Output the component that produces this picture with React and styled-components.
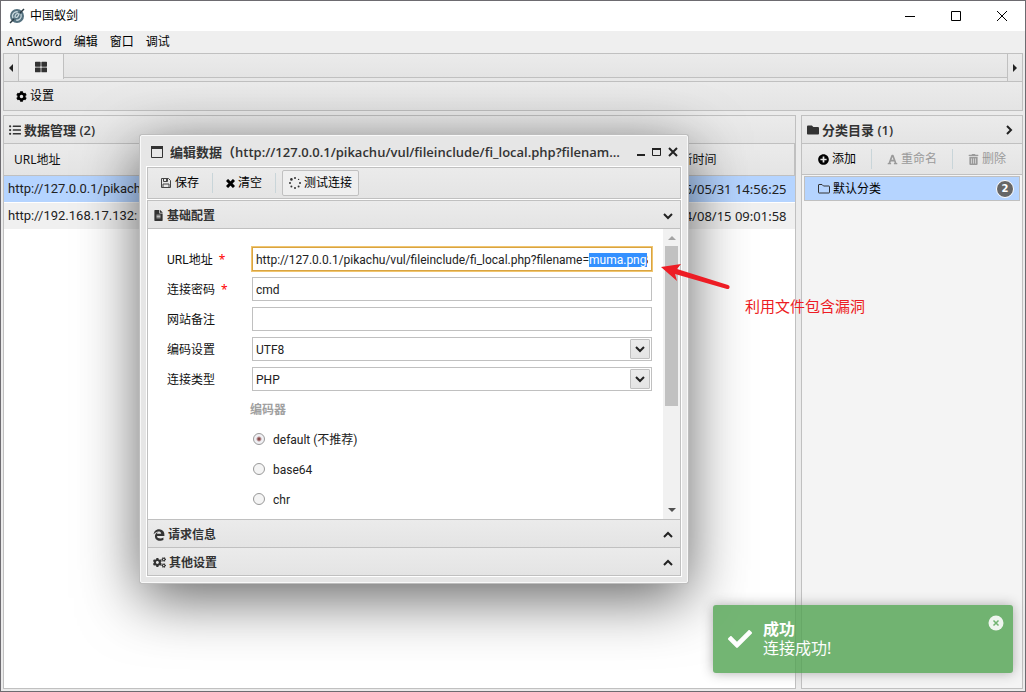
import React, { useEffect, useRef } from "react";
import styled, { createGlobalStyle, css } from "styled-components";
import {
  FaCog, FaCogs, FaListUl, FaFolder, FaPlusCircle, FaFont,
  FaTrashAlt, FaFileAlt, FaThLarge, FaCheck,
} from "react-icons/fa";

const line = "#c0c0c0";
const bar = "linear-gradient(#ebebeb, #e4e4e4)";
const uiFont = '"Noto Sans", "Noto Sans CJK SC", sans-serif';
const formFont = 'Roboto, "Noto Sans CJK SC", sans-serif';
const headFont = '"Open Sans", "Noto Sans CJK SC", sans-serif';

const GlobalStyle = createGlobalStyle`
  * { box-sizing: border-box; }
  body { margin: 0; font: 12px/16px ${uiFont}; color: #111; background: #ebebeb; }
  button, input, select { font: inherit; color: inherit; }
  svg { display: block; flex: none; }
`;

const Shell = styled.div`
  position: relative;
  min-height: 100vh;
  display: flex;
  flex-direction: column;
  border: 1px solid #6d6b70;
  background: #ebebeb;
  overflow: hidden;
`;

const TitleBar = styled.header`
  display: flex;
  align-items: center;
  height: 30px;
  padding-left: 8px;
  background: #fff;
  color: #000;
`;
const AppName = styled.h1`
  flex: 1;
  margin: 0 0 0 5px;
  font-size: 12px;
  font-weight: 400;
`;
const CaptionButton = styled.button`
  display: grid;
  place-items: center;
  width: 46px;
  height: 30px;
  padding: 0;
  border: 0;
  background: none;
`;

const MenuBar = styled.nav`
  display: flex;
  gap: 12px;
  height: 22px;
  padding: 0 6px;
  background: #efefef;
`;
const MenuItem = styled.button`
  padding: 0;
  border: 0;
  background: none;
  color: #000;
`;

const Workspace = styled.main`
  flex: 1;
  display: flex;
  flex-direction: column;
  padding: 0 2px 2px;
`;

const TabBar = styled.div`
  display: flex;
  height: 29px;
  border: 1px solid ${line};
  background: #e8e8e8;
`;
const TabArrow = styled.button`
  display: grid;
  place-items: center;
  width: 15px;
  padding: 0;
  border: 0;
  border-${(p) => (p.$end ? "left" : "right")}: 1px solid ${line};
  background: ${bar};
`;
const Tab = styled.button`
  display: flex;
  justify-content: center;
  align-items: center;
  width: 45px;
  height: 25px;
  padding: 0;
  border: 0;
  border-right: 1px solid ${line};
  background: #efefef;
  color: #333;
`;
const TabTrack = styled.div`
  flex: 1;
  height: 24px;
  border-bottom: 1px solid ${line};
  background: ${bar};
`;

const Ribbon = styled.div`
  display: flex;
  align-items: center;
  height: 29px;
  padding-left: 5px;
  border: 1px solid ${line};
  border-top: 0;
  background: ${bar};
`;
const ToolButton = styled.button`
  display: flex;
  align-items: center;
  gap: 3px;
  height: 26px;
  padding: 0 6px;
  border: 1px solid ${(p) => (p.$raised ? line : "transparent")};
  border-radius: 2px;
  background: ${(p) => (p.$raised ? "#efefef" : "none")};
  color: ${(p) => (p.disabled ? "#9a9a9a" : "#000")};
`;
const Divider = styled.span`
  width: 1px;
  height: 20px;
  background: #c9d5d9;
`;

const Columns = styled.div`
  flex: 1;
  display: flex;
  gap: 5px;
  padding-top: 4px;
`;
const Panel = styled.section`
  display: flex;
  flex-direction: column;
  border: 1px solid ${line};
  background: ${(p) => (p.$side ? "#f4f4f4" : "#fff")};
  ${(p) => (p.$side ? css`width: 222px; flex: none;` : css`flex: 1; min-width: 0;`)}
`;
const PanelHead = styled.h2`
  display: flex;
  align-items: center;
  gap: 3px;
  height: 28px;
  margin: 0;
  padding: 0 8px 0 5px;
  border-bottom: 1px solid ${line};
  background: ${bar};
  color: #333;
  font: 600 13px/18px ${headFont};
`;
const Grow = styled.span`
  flex: 1;
  overflow: hidden;
  white-space: nowrap;
  text-overflow: ellipsis;
`;

const Grid = styled.table`
  width: 100%;
  border-collapse: collapse;
  table-layout: fixed;
  th {
    height: 31px;
    padding: 2px 10px 0;
    border-bottom: 1px solid ${line};
    background: ${bar};
    font-weight: 400;
    text-align: left;
  }
  td {
    height: 27px;
    padding: 0 4px;
    overflow: hidden;
    color: #222;
    font-size: 13px;
    white-space: nowrap;
  }
  td:first-child { font-family: ${formFont}; }
  th:last-child, td:last-child { width: 136px; }
  td:last-child { padding: 0 8px 0 0; text-align: right; }
  th:last-child { border-right: 1px solid ${line}; }
`;
const GridRow = styled.tr`
  background: ${(p) => (p.$selected ? "#b5d4ff" : "#f0f0f0")};
  border-bottom: 1px solid #fff;
`;

const PanelTools = styled.div`
  display: flex;
  align-items: center;
  justify-content: space-between;
  height: 31px;
  padding: 0 9px;
  border-bottom: 1px solid ${line};
  background: ${bar};
`;
const Category = styled.button`
  display: flex;
  align-items: center;
  gap: 3px;
  height: 25px;
  margin: 1px 2px;
  padding: 0 5px 0 13px;
  border: 1px solid ${line};
  background: #b5d4ff;
  color: #000;
  text-align: left;
`;
const Count = styled.span`
  display: grid;
  place-items: center;
  width: 18px;
  height: 18px;
  border: 1px solid #fff;
  border-radius: 50%;
  background: #666;
  color: #fff;
  font: 700 10px/16px "DejaVu Sans", sans-serif;
`;

const Dialog = styled.section`
  position: absolute;
  left: 139px;
  top: 134px;
  width: 548px;
  padding: 0 6px 6px;
  border: 1px solid #f8f8f8;
  border-radius: 2px;
  background: #e6e6e6;
  box-shadow: 0 0 0 1px #bdbdbd, 0 15px 60px rgba(0, 0, 0, 0.62);
`;
const DialogHead = styled.header`
  display: flex;
  align-items: center;
  gap: 7px;
  height: 31px;
  padding: 0 3px 0 4px;
  color: #333;
`;
const DialogTitle = styled.h2`
  flex: 1;
  min-width: 0;
  margin: 0 4px 0 0;
  overflow: hidden;
  font: 600 13px/18px ${headFont};
  white-space: nowrap;
  text-overflow: ellipsis;
`;
const IconButton = styled.button`
  padding: 0;
  border: 0;
  background: none;
  color: #222;
`;
const DialogTools = styled.div`
  display: flex;
  align-items: center;
  gap: 6px;
  height: 32px;
  padding: 0 5px;
  border: 1px solid ${line};
  outline: 1px solid #fff;
  background: ${bar};
`;
const Accordion = styled.div`
  margin-top: 1px;
  border: 1px solid ${line};
  outline: 1px solid #fff;
`;
const SectionHead = styled(PanelHead)`
  padding: 2px 7px 0 5px;
  border-top: ${(p) => (p.$closed ? `1px solid ${line}` : "0")};
  border-bottom: ${(p) => (p.$closed ? "0" : `1px solid ${line}`)};
  font: 700 12px/16px ${uiFont};
`;
const SectionBody = styled.div`
  display: flex;
  background: #fff;
`;

const Form = styled.form`
  flex: 1;
  display: grid;
  gap: 6px;
  padding: 18px 11px 8px 19px;
  font-family: ${formFont};
`;
const Field = styled.div`
  display: grid;
  grid-template-columns: 85px 1fr;
  align-items: center;
  height: 24px;
  label { padding-top: 2px; }
`;
const Required = styled.span`
  margin-left: 6px;
  color: #f00;
  font-family: ${uiFont};
`;
const TextBox = styled.input`
  width: 100%;
  height: 24px;
  padding: 2px 3px 0;
  border: 1px solid ${line};
  border-radius: 0;
  background: #fff;
  color: #222;
  &:focus {
    outline: 1px solid #f0c56f;
    border-color: #d9a441;
  }
  &::selection { background: #3390ff; color: #fff; }
`;
const SelectWrap = styled.div`
  position: relative;
`;
const Select = styled.select`
  display: block;
  width: 100%;
  height: 24px;
  padding: 2px 3px 0;
  border: 1px solid ${line};
  border-radius: 0;
  appearance: none;
  background: #fff;
  color: #222;
`;
const SelectMark = styled.span`
  position: absolute;
  top: 2px;
  right: 2px;
  display: grid;
  place-items: center;
  width: 20px;
  height: 20px;
  border: 1px solid ${line};
  border-radius: 1px;
  background: ${bar};
  pointer-events: none;
`;
const GroupTitle = styled.div`
  height: 24px;
  padding-left: 83px;
  color: #a0a0a0;
  font-weight: 700;
  line-height: 26px;
`;
const Choice = styled.label`
  display: flex;
  align-items: center;
  gap: 8px;
  height: 24px;
  padding-left: 86px;
  color: #222;
  span { padding-top: 2px; }
`;
const Radio = styled.input`
  width: 12px;
  height: 12px;
  margin: 0;
  border: 1px solid #999;
  border-radius: 50%;
  appearance: none;
  background: #f4f4f4;
  &:checked { background: radial-gradient(circle, #8a4b4b 1px, #f0f0f4 3px); }
`;

const ScrollTrack = styled.div`
  display: flex;
  flex-direction: column;
  align-items: center;
  width: 17px;
  padding: 6px 0;
  background: #f1f1f1;
`;
const ScrollThumb = styled.div`
  width: 13px;
  height: 160px;
  margin: 6px 0 auto;
  background: #c1c1c1;
`;

const Toast = styled.div`
  position: absolute;
  right: 12px;
  bottom: 18px;
  display: flex;
  align-items: center;
  gap: 11px;
  width: 300px;
  height: 68px;
  padding: 0 15px;
  border-radius: 3px;
  background: #51a351;
  box-shadow: 0 0 12px #999;
  color: #fff;
  font-size: 16px;
  line-height: 19px;
  opacity: 0.8;
`;
const ToastText = styled.div`
  flex: 1;
`;
const ToastClose = styled(IconButton)`
  align-self: flex-start;
  margin: 10px -6px 0 0;
`;

const Note = styled.div`
  position: absolute;
  left: 659px;
  top: 260px;
  color: #ed1c24;
  font: 15px/20px "Noto Sans CJK SC", sans-serif;
  p { margin: 7px 0 0 85px; }
  svg { height: 28px; }
`;

const chevrons = {
  down: "M1 3 5 7 9 3",
  up: "M1 7 5 3 9 7",
  right: "M3 1 7 5 3 9",
};
const Chevron = ({ to }) => (
  <svg width="10" height="10" viewBox="0 0 10 10" fill="none" stroke="#222" strokeWidth="2">
    <path d={chevrons[to]} />
  </svg>
);

const triangles = {
  left: "M5 0V8L1 4Z",
  right: "M1 0V8L5 4Z",
};
const Triangle = ({ to }) => (
  <svg width="6" height="8" viewBox="0 0 6 8" fill="#222"><path d={triangles[to]} /></svg>
);

const Logo = () => (
  <svg width="16" height="16" viewBox="0 0 16 16">
    <circle cx="8" cy="8" r="7" fill="#54717f" />
    <path d="M4 10C2 6 6 3 9 4M12 6c1 4-2 7-5 6M6 9c0-3 2-4 4-3-1 3-2 4-4 3Z" fill="none" stroke="#c9d8de" strokeWidth="1.3" />
    <path d="M1 15 5 11M11 5 15 1" stroke="#2b3a42" strokeWidth="1.5" />
  </svg>
);

const SpinDots = () => (
  <svg width="12" height="12" viewBox="0 0 12 12" fill="#333">
    <circle cx="6" cy="1" r="1" /><circle cx="9.6" cy="2.4" r=".7" />
    <circle cx="11" cy="6" r="1" /><circle cx="9.6" cy="9.6" r="1" />
    <circle cx="6" cy="11" r="1" /><circle cx="2.4" cy="9.6" r="1" />
    <circle cx="1" cy="6" r="1" /><circle cx="2.4" cy="2.4" r="1.3" />
  </svg>
);

const Floppy = () => (
  <svg width="12" height="12" viewBox="0 0 12 12" fill="none" stroke="#444">
    <path d="M1.5 1.500h7l2 2v7h-9z" />
    <path d="M3.500 1.500v3h4v-3M3 10.500v-3.500h6v3.500" />
    <path d="M6.500 2v2" />
  </svg>
);

const Clear = () => (
  <svg width="9" height="9" viewBox="0 0 9 9" stroke="#000" strokeWidth="3">
    <path d="M1 1 8 8M8 1 1 8" />
  </svg>
);

const FolderOutline = () => (
  <svg width="12" height="12" viewBox="0 0 12 12" fill="none" stroke="#333">
    <path d="M.5 2q0-.5.5-.5h3l1.500 1.500h5.500q.5 0 .5.500v6q0 .5-.5.5h-10q-.5 0-.5-.5z" />
  </svg>
);

const EdgeMark = () => (
  <svg width="12" height="12" viewBox="0 0 512 512" fill="#333">
    <path d="M25.714 228.163c.111-.162.23-.323.342-.485-.021.162-.045.323-.065.485h-.277zm460.572 15.508c0-44.032-7.754-84.465-28.801-122.405C416.498 47.879 343.912 8.001 258.893 8.001 118.962 7.724 40.617 113.214 26.056 227.679c42.429-61.312 117.073-121.376 220.375-124.966 0 0 109.666 0 99.419 104.957H169.997c6.369-37.386 18.554-58.986 34.339-78.926-75.048 34.9-121.85 96.096-120.742 188.315.83 71.448 50.124 144.836 120.743 171.976 83.357 31.843 192.776 7.2 240.132-21.324V363.307c-80.864 56.494-270.871 60.925-272.255-67.572h314.073v-52.064z" />
  </svg>
);

const rows = [
  { url: "http://127.0.0.1/pikachu/", time: "2025/05/31 14:56:25", selected: true },
  { url: "http://192.168.17.132:", time: "2024/08/15 09:01:58" },
];
const encoders = ["default (不推荐)", "base64", "chr"];
const target = "http://127.0.0.1/pikachu/vul/fileinclude/fi_local.php?filename=muma.png&submit=1";

function SelectField({ id, label, value }) {
  return (
    <Field>
      <label htmlFor={id}>{label}</label>
      <SelectWrap>
        <Select id={id} defaultValue={value}><option>{value}</option></Select>
        <SelectMark><Chevron to="down" /></SelectMark>
      </SelectWrap>
    </Field>
  );
}

function EditDialog() {
  const urlRef = useRef(null);
  useEffect(() => {
    const box = urlRef.current;
    const start = target.indexOf("muma.png");
    box.focus({ preventScroll: true });
    box.setSelectionRange(start, start + 8);
  }, []);
  return (
    <Dialog role="dialog" aria-labelledby="dialog-title">
      <DialogHead>
        <svg width="12" height="12" viewBox="0 0 12 12" fill="none" stroke="#333">
          <path d="M.5 .5h11v11H.5z" /><path d="M0 1.5h12" strokeWidth="3" />
        </svg>
        <DialogTitle id="dialog-title">编辑数据（{target}）</DialogTitle>
        <IconButton aria-label="最小化">
          <svg width="8" height="10" viewBox="0 0 8 10"><path d="M0 8h8" stroke="#222" strokeWidth="2" /></svg>
        </IconButton>
        <IconButton aria-label="最大化">
          <svg width="9" height="8" viewBox="0 0 9 8"><path d="M.5 1v6.500h8V1" fill="none" stroke="#222" /><path d="M0 1h9" stroke="#222" strokeWidth="2" /></svg>
        </IconButton>
        <IconButton aria-label="关闭">
          <svg width="10" height="10" viewBox="0 0 10 10"><path d="M1 1 9 9M9 1 1 9" stroke="#222" strokeWidth="2" /></svg>
        </IconButton>
      </DialogHead>
      <DialogTools>
        <ToolButton><Floppy />保存</ToolButton>
        <Divider />
        <ToolButton><Clear />清空</ToolButton>
        <Divider />
        <ToolButton $raised><SpinDots />测试连接</ToolButton>
      </DialogTools>
      <Accordion>
        <SectionHead><FaFileAlt size={11} /><Grow>基础配置</Grow><Chevron to="down" /></SectionHead>
        <SectionBody>
          <Form>
            <Field>
              <label htmlFor="url">URL地址<Required>*</Required></label>
              <TextBox id="url" ref={urlRef} defaultValue={target} />
            </Field>
            <Field>
              <label htmlFor="pwd">连接密码<Required>*</Required></label>
              <TextBox id="pwd" defaultValue="cmd" />
            </Field>
            <Field>
              <label htmlFor="note">网站备注</label>
              <TextBox id="note" />
            </Field>
            <SelectField id="encode" label="编码设置" value="UTF8" />
            <SelectField id="type" label="连接类型" value="PHP" />
            <GroupTitle>编码器</GroupTitle>
            {encoders.map((name, i) => (
              <Choice key={name}>
                <Radio type="radio" name="encoder" defaultChecked={i === 0} />
                <span>{name}</span>
              </Choice>
            ))}
          </Form>
          <ScrollTrack>
            <svg width="8" height="5" viewBox="0 0 8 5" fill="#a3a3a3"><path d="M0 5 4 1 8 5Z" /></svg>
            <ScrollThumb />
            <svg width="8" height="5" viewBox="0 0 8 5" fill="#505050"><path d="M0 0 4 4 8 0Z" /></svg>
          </ScrollTrack>
        </SectionBody>
        <SectionHead $closed><EdgeMark /><Grow>请求信息</Grow><Chevron to="up" /></SectionHead>
        <SectionHead $closed><FaCogs size={13} /><Grow>其他设置</Grow><Chevron to="up" /></SectionHead>
      </Accordion>
    </Dialog>
  );
}

export default function App() {
  return (
    <Shell>
      <GlobalStyle />
      <TitleBar>
        <Logo />
        <AppName>中国蚁剑</AppName>
        <CaptionButton aria-label="最小化">
          <svg width="10" height="10"><path d="M0 5.500h10" stroke="#000" /></svg>
        </CaptionButton>
        <CaptionButton aria-label="最大化">
          <svg width="10" height="10"><path d="M.5 .5h9v9h-9z" fill="none" stroke="#000" /></svg>
        </CaptionButton>
        <CaptionButton aria-label="关闭">
          <svg width="10" height="10"><path d="M0 0 10 10M10 0 0 10" stroke="#000" /></svg>
        </CaptionButton>
      </TitleBar>
      <MenuBar>
        {["AntSword", "编辑", "窗口", "调试"].map((m) => <MenuItem key={m}>{m}</MenuItem>)}
      </MenuBar>
      <Workspace>
        <TabBar>
          <TabArrow aria-label="向左"><Triangle to="left" /></TabArrow>
          <Tab aria-label="主页"><FaThLarge size={12} /></Tab>
          <TabTrack />
          <TabArrow $end aria-label="向右"><Triangle to="right" /></TabArrow>
        </TabBar>
        <Ribbon>
          <ToolButton><FaCog size={11} />设置</ToolButton>
        </Ribbon>
        <Columns>
          <Panel>
            <PanelHead><FaListUl size={12} /><Grow>数据管理 (2)</Grow></PanelHead>
            <Grid>
              <thead><tr><th>URL地址</th><th>更新时间</th></tr></thead>
              <tbody>
                {rows.map((r) => (
                  <GridRow key={r.url} $selected={r.selected}><td>{r.url}</td><td>{r.time}</td></GridRow>
                ))}
              </tbody>
            </Grid>
          </Panel>
          <Panel $side>
            <PanelHead><FaFolder size={12} /><Grow>分类目录 (1)</Grow><Chevron to="right" /></PanelHead>
            <PanelTools>
              <ToolButton><FaPlusCircle size={11} />添加</ToolButton>
              <Divider />
              <ToolButton disabled><FaFont size={11} />重命名</ToolButton>
              <Divider />
              <ToolButton disabled><FaTrashAlt size={11} />删除</ToolButton>
            </PanelTools>
            <Category><FolderOutline /><Grow>默认分类</Grow><Count>2</Count></Category>
          </Panel>
        </Columns>
      </Workspace>
      <EditDialog />
      <Note>
        <svg width="72" height="28" viewBox="0 0 72 28" fill="#ed1c24">
          <path d="M1 6 21 3 17 8 68 24a2 2 0 0 1-1 4L15 13 17 20Z" />
        </svg>
        <p>利用文件包含漏洞</p>
      </Note>
      <Toast role="status">
        <FaCheck size={24} />
        <ToastText><strong>成功</strong><div>连接成功!</div></ToastText>
        <ToastClose aria-label="关闭">
          <svg width="16" height="16" viewBox="0 0 16 16">
            <circle cx="8" cy="8" r="7.500" fill="#fff" opacity=".9" />
            <path d="M5.500 5.500 10.500 10.500M10.500 5.500 5.500 10.500" stroke="#51a351" strokeWidth="1.500" />
          </svg>
        </ToastClose>
      </Toast>
    </Shell>
  );
}
